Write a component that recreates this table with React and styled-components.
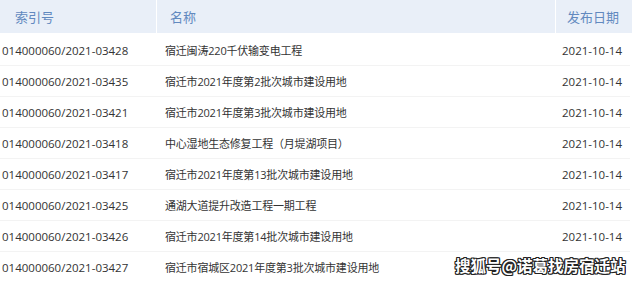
import React from "react";
import styled, { createGlobalStyle } from "styled-components";

const Global = createGlobalStyle`
  html, body { margin: 0; padding: 0; background: #fff; }
  body { width: 640px; height: 281px; overflow: hidden; font-family: "Open Sans", "Noto Sans CJK SC", sans-serif; }
`;

const Page = styled.div`
  position: relative;
  width: 640px;
  height: 281px;
  overflow: hidden;
`;

const Table = styled.div`
  width: 630px;
  display: flex;
  flex-direction: column;
`;

const HeaderRow = styled.div`
  display: grid;
  grid-template-columns: 156px 398px 76px;
  column-gap: 1px;
  height: 33px;
  margin-bottom: 2px;
`;

const HeadCell = styled.div`
  background: #e9eff8;
  color: #6289bf;
  font-family: "Noto Sans CJK SC", sans-serif;
  font-size: 13px;
  display: flex;
  align-items: center;
  justify-content: ${(p) => (p.$right ? "flex-end" : "flex-start")};
  padding: ${(p) => (p.$right ? "0 13px 0 0" : "0 0 0 13px")};
  padding-left: ${(p) => p.$pl || "13px"};
  box-sizing: border-box;
`;

const Row = styled.div`
  display: grid;
  grid-template-columns: 157px 398px 75px;
  height: 31px;
  border-bottom: 1px solid #f3f3f3;
  box-sizing: border-box;
  color: #333;
`;

const Cell = styled.div`
  display: flex;
  align-items: center;
  justify-content: ${(p) => (p.$right ? "flex-end" : "flex-start")};
  padding: ${(p) => p.$pad};
  font-size: ${(p) => p.$size || "11.5px"};
  letter-spacing: ${(p) => p.$ls || "0"};
  white-space: nowrap;
`;

const Watermark = styled.div`
  position: absolute;
  left: 455px;
  top: 254px;
  font-family: "Noto Sans CJK SC", sans-serif;
  font-weight: 700;
  font-size: 15.5px;
  color: #fff;
  text-shadow:
    -1px -1px 0 #222, 1px -1px 0 #222, -1px 1px 0 #222, 1px 1px 0 #222,
    0 -1px 0 #222, 0 1px 0 #222, -1px 0 0 #222, 1px 0 0 #222;
`;

const rows = [
  ["014000060/2021-03428", "宿迁闽涛220千伏输变电工程", "2021-10-14"],
  ["014000060/2021-03435", "宿迁市2021年度第2批次城市建设用地", "2021-10-14"],
  ["014000060/2021-03421", "宿迁市2021年度第3批次城市建设用地", "2021-10-14"],
  ["014000060/2021-03418", "中心湿地生态修复工程（月堤湖项目）", "2021-10-14"],
  ["014000060/2021-03417", "宿迁市2021年度第13批次城市建设用地", "2021-10-14"],
  ["014000060/2021-03425", "通湖大道提升改造工程一期工程", "2021-10-14"],
  ["014000060/2021-03426", "宿迁市2021年度第14批次城市建设用地", "2021-10-14"],
  ["014000060/2021-03427", "宿迁市宿城区2021年度第3批次城市建设用地", ""],
];

export default function App() {
  return (
    <Page>
      <Global />
      <Table>
        <HeaderRow>
          <HeadCell $pl="15px">索引号</HeadCell>
          <HeadCell>名称</HeadCell>
          <HeadCell $right $pl="0">发布日期</HeadCell>
        </HeaderRow>
        {rows.map(([id, name, date]) => (
          <Row key={id}>
            <Cell $pad="0 0 0 2px">{id}</Cell>
            <Cell $pad="0 0 0 8px" $size="11px" $ls="-0.2px">{name}</Cell>
            <Cell $pad="0 8px 0 0" $right>{date}</Cell>
          </Row>
        ))}
      </Table>
      <Watermark>搜狐号@诺葛找房宿迁站</Watermark>
    </Page>
  );
}
